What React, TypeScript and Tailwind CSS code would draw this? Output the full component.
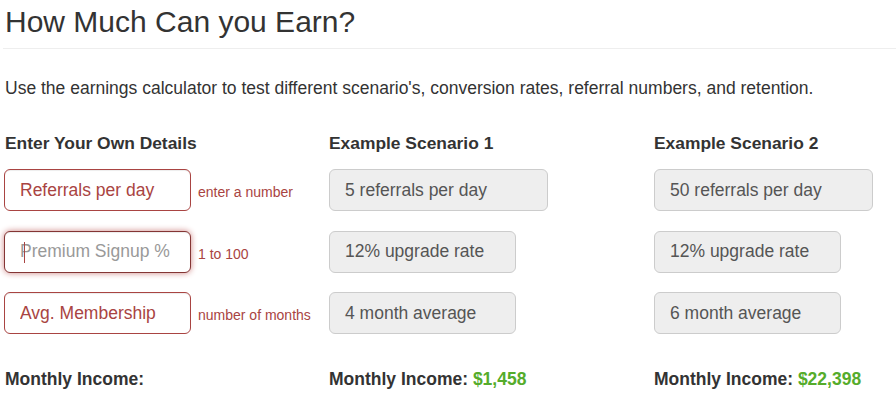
import React from 'react';

interface Field {
  placeholder: string;
  help: string;
  focused?: boolean;
}

interface Scenario {
  title: string;
  rows: { label: string; wide?: boolean }[];
  income: string;
}

const fields: Field[] = [
  { placeholder: 'Referrals per day', help: 'enter a number' },
  { placeholder: 'Premium Signup %', help: '1 to 100', focused: true },
  { placeholder: 'Avg. Membership', help: 'number of months' },
];

const scenarios: Scenario[] = [
  {
    title: 'Example Scenario 1',
    rows: [{ label: '5 referrals per day', wide: true }, { label: '12% upgrade rate' }, { label: '4 month average' }],
    income: '$1,458',
  },
  {
    title: 'Example Scenario 2',
    rows: [{ label: '50 referrals per day', wide: true }, { label: '12% upgrade rate' }, { label: '6 month average' }],
    income: '$22,398',
  },
];

const ErrorInput = ({ field }: { field: Field }) => (
  <div className="flex items-center h-[42px]">
    <div className="relative -ml-px">
      <input
        readOnly
        placeholder={field.placeholder}
        className={`w-[187px] h-[42px] rounded-[6px] border bg-white px-[15px] text-[17.5px] outline-none ${
          field.focused
            ? 'border-[#843534] shadow-[inset_0_1px_1px_rgba(0,0,0,0.075),0_0_6px_#ce8483] placeholder:text-[#999]'
            : 'border-[#a94442] shadow-[inset_0_1px_1px_rgba(0,0,0,0.075)] placeholder:text-[#a94442]'
        }`}
      />
      {field.focused && (
        <span className="absolute left-[20px] top-[11px] w-px h-[21px] bg-[#a94442]" />
      )}
    </div>
    <span className="ml-[7px] mt-[5px] text-[14px] text-[#a94442]">{field.help}</span>
  </div>
);

const ScenarioBox = ({ label, wide }: { label: string; wide?: boolean }) => (
  <div
    className={`flex items-center h-[42px] ${wide ? 'w-[219px]' : 'w-[187px]'} rounded-[6px] border border-[#ccc] bg-[#eee] px-[15px] text-[17.5px] text-[#555]`}
  >
    {label}
  </div>
);

export default function App() {
  return (
    <div className="w-[896px] h-[403px] overflow-hidden bg-white text-[#333] font-['Liberation_Sans',Arial,sans-serif]">
      <h2 className="pt-[5px] pl-[5px] text-[30px] leading-[33px]">How Much Can you Earn?</h2>
      <div className="mt-[10px] ml-[3px] border-t border-[#eee]" />

      <p className="mt-[28px] pl-[5px] text-[17.5px] leading-[23px]">
        Use the earnings calculator to test different scenario's, conversion rates, referral numbers, and retention.
      </p>

      <div className="mt-[34px] pl-[5px] grid grid-cols-[325px_325px_1fr]">
        <div>
          <h4 className="text-[17.4px] leading-[19px] font-bold">Enter Your Own Details</h4>
          <div className="mt-[16px] flex flex-col gap-[19.5px]">
            {fields.map((f) => (
              <ErrorInput key={f.placeholder} field={f} />
            ))}
          </div>
          <p className="mt-[36px] text-[17.5px] leading-[19px] font-bold">Monthly Income:</p>
        </div>

        {scenarios.map((s) => (
          <div key={s.title} className="-ml-px">
            <h4 className="text-[17.4px] leading-[19px] font-bold">{s.title}</h4>
            <div className="mt-[16px] flex flex-col gap-[19.5px]">
              {s.rows.map((r) => (
                <ScenarioBox key={r.label} label={r.label} wide={r.wide} />
              ))}
            </div>
            <p className="mt-[36px] text-[17.5px] leading-[19px] font-bold">
              Monthly Income: <span className="text-[#55ac2b]">{s.income}</span>
            </p>
          </div>
        ))}
      </div>
    </div>
  );
}
